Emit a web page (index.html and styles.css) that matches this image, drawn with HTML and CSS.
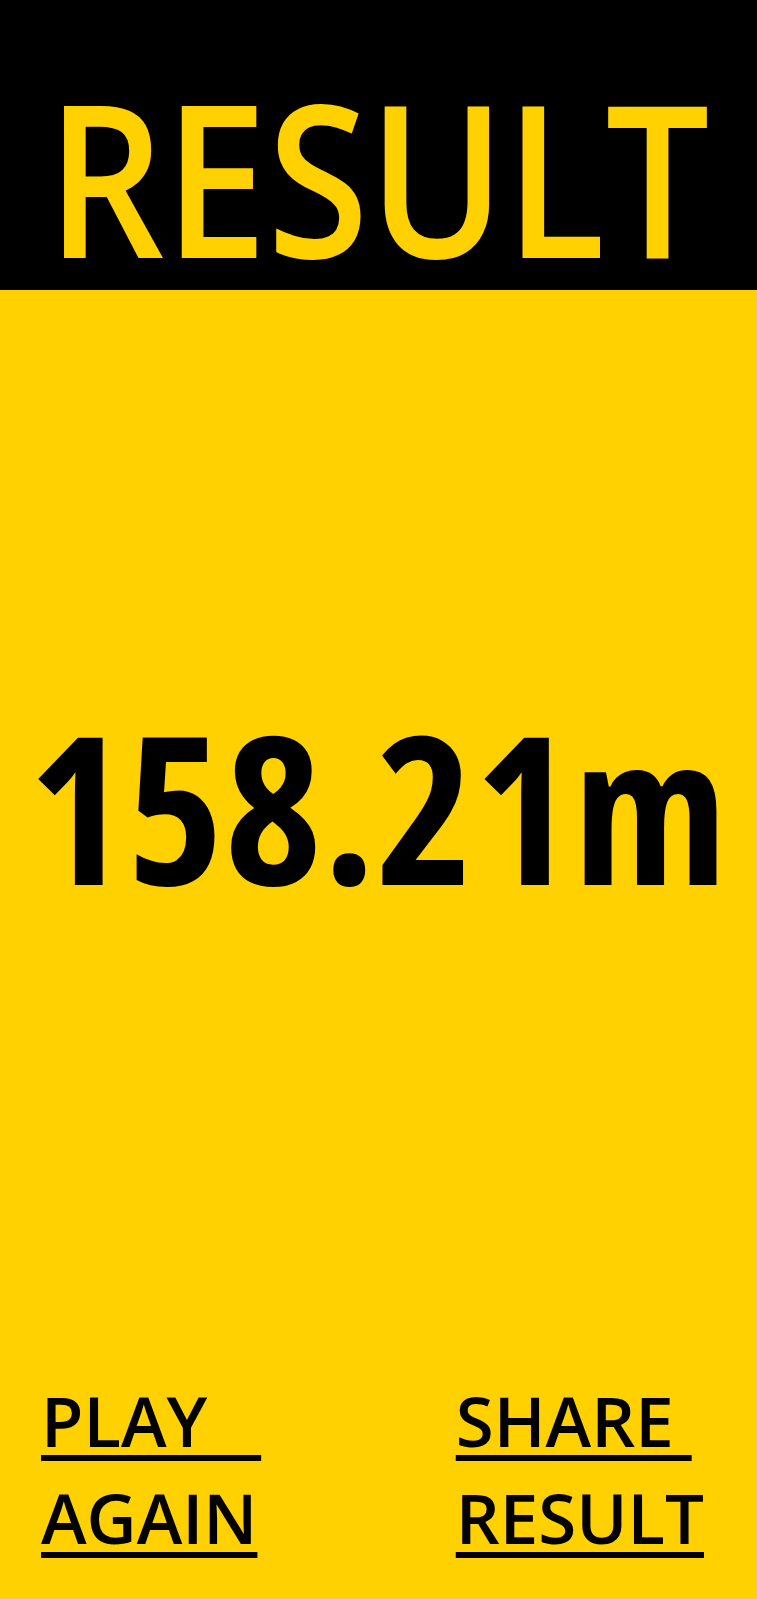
FILE: index.html
```html
<!DOCTYPE html>
<html lang="en">
<head>
    <meta charset="UTF-8">
    <meta name="viewport" content="width=device-width, initial-scale=1.0">
    <title>Result</title>
    <link rel="stylesheet" href="styles.css">
</head>
<body>

<div class="header">
    <h1 class="title">RESULT</h1>
</div>

<div class="main">
    <div class="score">158.21m</div>
</div>

<div class="actions">
    <a class="action play" href="#"><span>PLAY&nbsp;&nbsp;&nbsp;</span><span>AGAIN</span></a>
    <a class="action share" href="#"><span>SHARE&nbsp;</span><span>RESULT</span></a>
</div>

</body>
</html>
```

FILE: styles.css
```css
body {
    font-family: 'Open Sans', 'Noto Sans', sans-serif;
    background-color: #ffd100;
    margin: 0;
    padding: 0;
    height: 1599px;
    display: flex;
    flex-direction: column;
    overflow: hidden;
}

.header {
    background-color: #000;
    height: 290px;
    display: flex;
    align-items: center;
    justify-content: center;
}

.title {
    margin: 0;
    color: #ffd100;
    font-size: 213px;
    font-weight: 600;
    line-height: 1;
    padding-top: 60px;
    white-space: nowrap;
    transform: scaleX(0.865);
}

.main {
    flex: 1;
    display: flex;
    align-items: center;
    justify-content: center;
    padding-bottom: 52px;
}

.score {
    font-size: 207px;
    font-weight: 700;
    font-stretch: 75%;
    letter-spacing: 1px;
    line-height: 1;
    color: #000;
}

.actions {
    display: flex;
    justify-content: space-between;
    padding: 0 53px 33px 41px;
}

.action {
    display: flex;
    flex-direction: column;
    color: #000;
    font-size: 69px;
    font-weight: 600;
    line-height: 97px;
    text-decoration: underline;
    text-decoration-thickness: 6px;
    text-underline-offset: 8px;
}
```
